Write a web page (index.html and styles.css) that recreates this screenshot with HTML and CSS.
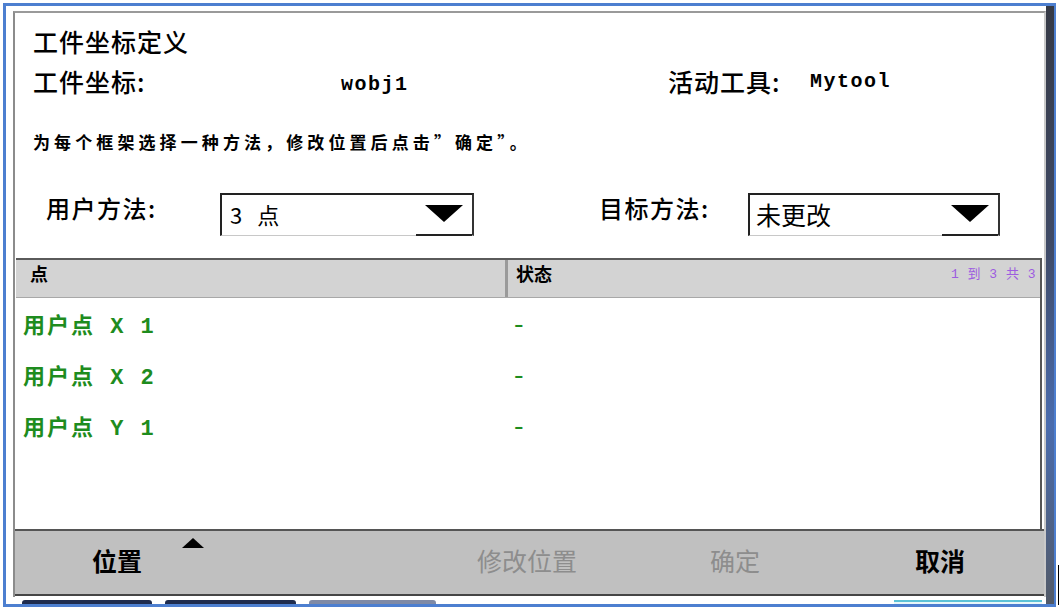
FILE: index.html
```html
<!DOCTYPE html>
<html lang="zh-CN">
<head>
<meta charset="utf-8">
<title>工件坐标定义</title>
<link rel="stylesheet" href="styles.css">
</head>
<body>
<div class="page">
  <div class="frame">
    <div class="gutter"></div>
    <div class="panel">
      <div class="box">
        <div class="head">
          <div class="title">工件坐标定义</div>
          <div class="info">
            <span class="lbl c1">工件坐标:</span>
            <span class="val c2">wobj1</span>
            <span class="lbl c3">活动工具:</span>
            <span class="val c4">Mytool</span>
          </div>
          <div class="hint">为每个框架选择一种方法，修改位置后点击”确定”。</div>
          <div class="methods">
            <span class="mlbl m1">用户方法:</span>
            <div class="drop d1">
              <span class="dtext"><span class="num">3</span>点</span>
              <span class="darrow"><svg width="38" height="17" viewBox="0 0 38 17"><polygon points="0,0 38,0 19,17" fill="#000"/></svg></span>
            </div>
            <span class="mlbl m2">目标方法:</span>
            <div class="drop d2">
              <span class="dtext big">未更改</span>
              <span class="darrow"><svg width="38" height="17" viewBox="0 0 38 17"><polygon points="0,0 38,0 19,17" fill="#000"/></svg></span>
            </div>
          </div>
        </div>
        <div class="table">
          <div class="thead">
            <div class="th col1">点</div>
            <div class="th col2"><span>状态</span><span class="count">1 到 3 共 3</span></div>
          </div>
          <div class="row"><span class="col1 pt">用户点 X 1</span><span class="col2 st">-</span></div>
          <div class="row"><span class="col1 pt">用户点 X 2</span><span class="col2 st">-</span></div>
          <div class="row"><span class="col1 pt">用户点 Y 1</span><span class="col2 st">-</span></div>
        </div>
        <div class="toolbar">
          <span class="btn b1 on">位置<span class="up"></span></span>
          <span class="btn b2 off">修改位置</span>
          <span class="btn b3 off">确定</span>
          <span class="btn on">取消</span>
        </div>
      </div>
      <div class="tabs">
        <span class="tab t1"></span>
        <span class="tab t2"></span>
        <span class="tab t3"></span>
        <span class="tabline"></span>
      </div>
    </div>
    <div class="rstrip"></div>
  </div>
  <div class="outside"><span class="vline"></span></div>
</div>
</body>
</html>
```

FILE: styles.css
```css
* { box-sizing: border-box; }
html, body { margin: 0; padding: 0; background: #fff; }
body {
  width: 1061px;
  height: 611px;
  overflow: hidden;
  font-family: "Noto Sans CJK SC", "Noto Sans", sans-serif;
  color: #000;
}
.page {
  display: flex;
  padding: 3px 0 0 3px;
  height: 611px;
}
.frame {
  display: flex;
  width: 1053px;
  height: 604px;
  border-style: solid;
  border-color: #4d7fd0;
  border-width: 3px 2px 3px 3px;
}
.gutter { width: 7px; flex: none; }
.panel {
  width: 1033px;
  flex: none;
  display: flex;
  flex-direction: column;
  padding-top: 5px;
}
.box {
  height: 586px;
  border-left: 2px solid #8c8c8c;
  border-top: 2px solid #9a9a9a;
  border-right: 2px solid #c9c9c9;
  display: flex;
  flex-direction: column;
  padding-bottom: 1px;
}
.head {
  height: 245px;
  flex: none;
  display: flex;
  flex-direction: column;
}
.title {
  margin-top: 14px;
  padding-left: 18px;
  font-size: 25px;
  line-height: 28px;
  font-weight: 500;
  letter-spacing: 1px;
}
.info {
  margin-top: 12px;
  padding-left: 18px;
  display: flex;
  align-items: center;
  height: 28px;
}
.lbl { font-size: 25px; line-height: 28px; font-weight: 500; letter-spacing: 1px; }
.val {
  font-family: "Liberation Mono", monospace;
  font-weight: bold;
  font-size: 20px;
  letter-spacing: 1.5px;
  line-height: 28px;
}
.info .c1 { width: 308px; }
.info .c2 { width: 327px; position: relative; top: 4px; }
.info .c3 { width: 142px; }
.info .c4 { position: relative; top: 1px; }
.hint {
  margin-top: 37px;
  padding-left: 18px;
  font-size: 17px;
  line-height: 20px;
  font-weight: bold;
  letter-spacing: 4.1px;
}
.methods {
  margin-top: 41px;
  display: flex;
  align-items: flex-start;
  height: 43px;
}
.mlbl { font-size: 24px; line-height: 30px; font-weight: 500; letter-spacing: 1.5px; }
.m1 { margin-left: 31px; width: 174px; }
.m2 { margin-left: 125px; width: 149px; }
.drop {
  height: 43px;
  display: flex;
  align-items: stretch;
  border-top: 2px solid #222;
  border-left: 2px solid #222;
  border-right: 2px solid #333;
  border-bottom: 1px solid #c8c8c8;
}
.d1 { width: 254px; }
.d2 { width: 252px; }
.dtext {
  flex: 1;
  padding-left: 8px;
  font-size: 22px;
  line-height: 38px;
}
.num { margin-right: 15px; }
.dtext.big { font-size: 25px; padding-left: 6px; }
.darrow {
  width: 56px;
  display: flex;
  align-items: center;
  justify-content: center;
  border-bottom: 2px solid #222;
  margin-bottom: -1px;
  padding-bottom: 2px;
}
.darrow svg { display: block; }

.table {
  height: 271px;
  flex: none;
  margin-left: 1px;
  width: 1026px;
  border-right: 2px solid #555;
  display: flex;
  flex-direction: column;
}
.thead {
  height: 40px;
  flex: none;
  display: flex;
  background: #d3d3d3;
  border-top: 2px solid #5a5a5a;
  border-bottom: 1px solid #a8a8a8;
}
.th { font-size: 18px; font-weight: bold; line-height: 26px; }
.thead .col1 {
  width: 492px;
  padding-left: 14px;
  border-right: 3px solid #9a9a9a;
}
.thead .col2 {
  flex: 1;
  padding-left: 8px;
  padding-right: 4px;
  display: flex;
  justify-content: space-between;
}
.count {
  font-family: "Liberation Mono", "Noto Sans CJK SC", monospace;
  font-weight: normal;
  font-size: 13px;
  line-height: 30px;
  color: #9d5ce0;
  letter-spacing: 0.5px;
}
.row {
  height: 51px;
  flex: none;
  display: flex;
  align-items: center;
  color: #1e8c1e;
}
.row .col1 {
  width: 495px;
  padding-left: 7px;
}
.pt {
  font-family: "Liberation Mono", "Noto Sans CJK SC", monospace;
  font-weight: bold;
  font-size: 22px;
  letter-spacing: 2px;
}
.st {
  font-family: "Liberation Mono", monospace;
  font-size: 26px;
  line-height: 26px;
  padding-left: 0;
  position: relative;
  top: 2px;
}

.toolbar {
  flex: 1;
  display: flex;
  align-items: flex-start;
  background: #c0c0c0;
  border-top: 2px solid #555;
  border-bottom: 2px solid #454545;
  padding-top: 14px;
}
.btn {
  font-size: 25px;
  line-height: 30px;
  position: relative;
}
.btn.on { font-weight: bold; color: #000; }
.btn.off { color: #8d8d8d; }
.b1 { margin-left: 77px; width: 385px; }
.b2 { width: 233px; }
.b3 { width: 205px; }
.up {
  position: absolute;
  left: 90px;
  top: -7px;
  width: 0;
  height: 0;
  border-left: 11px solid transparent;
  border-right: 11px solid transparent;
  border-bottom: 10px solid #000;
}
.tabs {
  flex: 1;
  display: flex;
  align-items: flex-end;
  padding-left: 9px;
  position: relative;
}
.tab {
  height: 4px;
  border-radius: 3px 3px 0 0;
  background: #1f2c4e;
  margin-right: 13px;
}
.t1 { width: 130px; }
.t2 { width: 131px; }
.t3 { width: 127px; background: #7f8aa6; }
.tabline {
  margin-left: auto;
  margin-right: 4px;
  width: 148px;
  height: 4px;
  border-top: 2px solid #5cc2d6;
  background: #e8f6f8;
}
.rstrip {
  width: 8px;
  flex: none;
  background: linear-gradient(to bottom, #363a46 0%, #3f4a66 40%, #4a6cae 70%, #525a68 100%);
}
.outside {
  width: 5px;
  position: relative;
}
.vline {
  position: absolute;
  left: 2px;
  top: 562px;
  width: 1px;
  height: 40px;
  background: #000;
}
```
